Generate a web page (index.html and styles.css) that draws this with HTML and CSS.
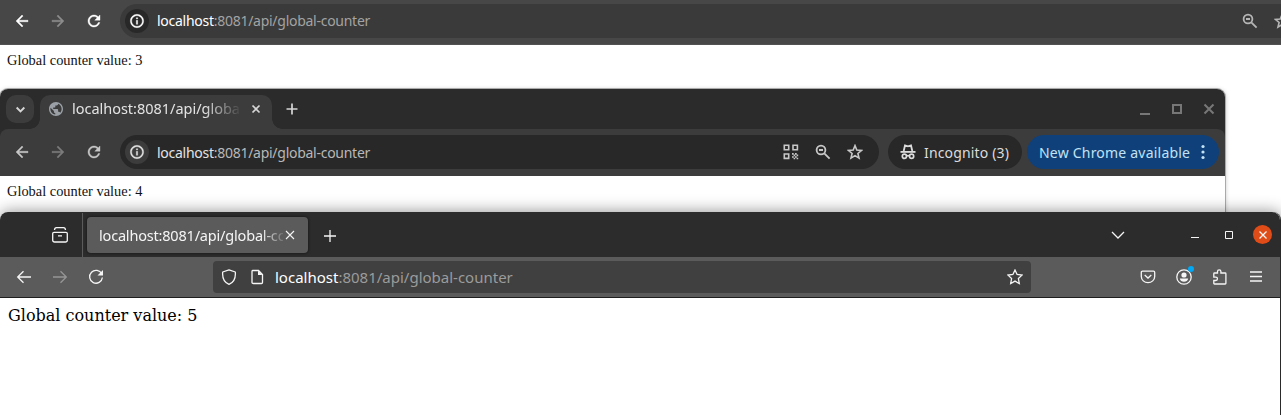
FILE: index.html
```html
<!DOCTYPE html>
<html lang="en">
<head>
<meta charset="utf-8">
<title>Global counter</title>
<link rel="stylesheet" href="styles.css">
</head>
<body>
<svg class="defs" width="0" height="0">
  <symbol id="back" viewBox="0 0 24 24"><path d="M20 11H7.83l5.59-5.59L12 4l-8 8 8 8 1.41-1.41L7.83 13H20v-2z"/></symbol>
  <symbol id="reload" viewBox="0 0 24 24"><path d="M17.65 6.35C16.2 4.9 14.21 4 12 4c-4.42 0-7.99 3.58-7.99 8s3.57 8 7.99 8c3.73 0 6.84-2.55 7.73-6h-2.08c-.82 2.33-3.04 4-5.65 4-3.31 0-6-2.69-6-6s2.69-6 6-6c1.66 0 3.14.69 4.22 1.78L13 11h7V4l-2.35 2.35z"/></symbol>
  <symbol id="info" viewBox="0 0 24 24"><path d="M11 7h2v2h-2zm0 4h2v6h-2zm1-9C6.48 2 2 6.48 2 12s4.48 10 10 10 10-4.48 10-10S17.52 2 12 2zm0 18c-4.41 0-8-3.59-8-8s3.59-8 8-8 8 3.59 8 8-3.59 8-8 8z"/></symbol>
  <symbol id="globe" viewBox="2 2 20 20"><path d="M12 2C6.480 2 2 6.480 2 12s4.480 10 10 10 10-4.480 10-10S17.520 2 12 2zm-1 17.930c-3.950-.490-7-3.850-7-7.930 0-.620.080-1.210.210-1.790L9 15v1c0 1.100.900 2 2 2v1.930zm6.900-2.540c-.260-.810-1-1.390-1.900-1.390h-1v-3c0-.550-.450-1-1-1H8v-2h2c.550 0 1-.450 1-1V7h2c1.100 0 2-.900 2-2v-.410c2.930 1.190 5 4.060 5 7.410 0 2.080-.800 3.970-2.100 5.390z"/></symbol>
  <symbol id="zoom" viewBox="0 0 16 16"><g fill="none" stroke="currentColor" stroke-width="1.8"><circle cx="6" cy="6" r="4.4"/><path d="M9.300 9.300 14.600 14.600M4 6h4"/></g></symbol>
  <symbol id="star" viewBox="0 0 16 16"><path d="M8 1.600 9.800 6l4.700.400-3.600 3.100 1.100 4.600L8 11.600l-4 2.500 1.100-4.600L1.500 6.400 6.200 6z" fill="none" stroke="currentColor" stroke-width="1.6"/></symbol>
  <symbol id="qr" viewBox="0 0 16 16"><g fill="none" stroke="currentColor" stroke-width="1.6"><path d="M1.300 1.300h4.400v4.400H1.300zM10 1.300h4.400v4.400H10zM1.300 10h4.400v4.400H1.300z"/></g><path d="M9 9h1.700v1.700H9zM12 9h1.700v1.700H12zM10.600 10.600h1.600v1.600h-1.600zM13.600 10.600h1.600v1.600h-1.600zM9 12.200h1.700v1.600H9zM12 12.200h1.700v1.600H12zM10.600 13.700h1.600v1.600h-1.600zM13.600 13.700h1.600v1.600h-1.600z"/></symbol>
  <symbol id="spy" viewBox="0 0 16 16"><path d="M.5 7h15v1.800H.5z"/><path d="M3.700 7 5 1.500l3 .9 3-.9L12.300 7" fill="none" stroke="currentColor" stroke-width="1.800"/><g fill="none" stroke="currentColor" stroke-width="1.700"><circle cx="4.400" cy="12.300" r="2.100"/><circle cx="11.600" cy="12.300" r="2.100"/><path d="M6.500 12q1.500-.8 3 0"/></g></symbol>
  <symbol id="foxback" viewBox="0 0 16 16"><path d="M15 8H1.800M7.500 2.200 1.700 8l5.800 5.800" class="line"/></symbol>
  <symbol id="foxreload" viewBox="0 0 16 16"><path d="M13.800 5A6.400 6.400 0 1 0 14.400 8.500" class="line"/><path d="M15 1v5.500H9.500z"/></symbol>
  <symbol id="foxstar" viewBox="0 0 16 16"><path d="M8 1 10.100 5.500 15 6.100 11.400 9.500 12.300 14.500 8 12.100 3.700 14.500 4.600 9.500 1 6.100 5.900 5.500z" class="line"/></symbol>
</svg>
<main class="desktop">
  <section class="window plain">
    <header class="toolbar">
      <span class="nav on"><svg><use href="#back"/></svg></span>
      <span class="nav flip"><svg><use href="#back"/></svg></span>
      <span class="nav on"><svg><use href="#reload"/></svg></span>
      <div class="omnibox">
        <span class="site"><svg><use href="#info"/></svg></span>
        <span class="url"><b>localhost</b>:8081/api/global-counter</span>
        <span class="act"><svg><use href="#zoom"/></svg></span>
        <span class="act"><svg><use href="#star"/></svg></span>
      </div>
    </header>
    <p class="page">Global counter value: 3</p>
  </section>

  <section class="window incog">
    <div class="tabs">
      <span class="search"><svg viewBox="0 0 10 10"><path d="M1.500 3.200 5 6.700l3.500-3.500" class="line thick"/></svg></span>
      <div class="tab">
        <svg class="fav"><use href="#globe"/></svg>
        <span class="title">localhost:8081/api/globa</span>
        <svg class="x" viewBox="0 0 10 10"><path d="m1.500 1.500 7 7m0-7-7 7" class="line thick"/></svg>
      </div>
      <svg class="plus" viewBox="0 0 12 12"><path d="M6 .5v11M.5 6h11" class="line thick"/></svg>
      <div class="controls">
        <svg viewBox="0 0 12 12"><path d="M1 10h10v2H1z"/></svg>
        <svg viewBox="0 0 12 12"><path d="M2 2h8v8H2z" class="line bold"/></svg>
        <svg viewBox="0 0 12 12"><path d="m1.500 1.500 9 9m0-9-9 9" class="line bold"/></svg>
      </div>
    </div>
    <header class="toolbar">
      <span class="nav"><svg><use href="#back"/></svg></span>
      <span class="nav flip"><svg><use href="#back"/></svg></span>
      <span class="nav"><svg><use href="#reload"/></svg></span>
      <div class="omnibox">
        <span class="site"><svg><use href="#info"/></svg></span>
        <span class="url"><b>localhost</b>:8081/api/global-counter</span>
        <span class="act"><svg><use href="#qr"/></svg></span>
        <span class="act"><svg><use href="#zoom"/></svg></span>
        <span class="act"><svg><use href="#star"/></svg></span>
      </div>
      <div class="mode"><svg><use href="#spy"/></svg><span>Incognito (3)</span></div>
      <div class="update"><span>New Chrome available</span><svg viewBox="0 0 4 16"><circle cx="2" cy="2.500" r="1.600"/><circle cx="2" cy="8" r="1.600"/><circle cx="2" cy="13.500" r="1.600"/></svg></div>
    </header>
    <p class="page">Global counter value: 4</p>
  </section>

  <section class="window fox">
    <div class="foxtabs">
      <div class="view"><svg class="i16" viewBox="0 0 16 16"><path d="M2 5.300h12a1.300 1.300 0 0 1 1.300 1.300v6.600a1.800 1.800 0 0 1-1.800 1.800h-11a1.800 1.800 0 0 1-1.800-1.800V6.600A1.300 1.300 0 0 1 2 5.300zM2.500 3Q2.600.800 4.500.700h7q1.900.100 2 2.300M6 8.900h4" class="line"/></svg></div>
      <div class="foxtab"><span class="foxtitle">localhost:8081/api/global-co</span><svg viewBox="0 0 10 10"><path d="m1 1 8 8m0-8-8 8" class="line"/></svg></div>
      <svg class="foxplus" viewBox="0 0 12 12"><path d="M6 0v12M0 6h12" class="line"/></svg>
      <svg class="all" viewBox="0 0 14 8"><path d="m1 1 6 6 6-6" class="line"/></svg>
      <div class="foxcontrols">
        <svg viewBox="0 0 8 8"><path d="M0 6h8v1H0z"/></svg>
        <svg viewBox="0 0 8 8"><path d="M.5.5h7v7h-7z" class="line thin"/></svg>
        <span class="close"><svg viewBox="0 0 8 8"><path d="m.5.5 7 7m0-7-7 7" class="line"/></svg></span>
      </div>
    </div>
    <header class="foxbar">
      <span class="fnav"><svg class="i16"><use href="#foxback"/></svg></span>
      <span class="fnav flip"><svg class="i16"><use href="#foxback"/></svg></span>
      <span class="fnav"><svg class="i16"><use href="#foxreload"/></svg></span>
      <div class="address">
        <svg class="i16" viewBox="0 0 16 16"><path d="M8 .8 14.300 3c.5 5.500-1.300 10.200-6.300 12.300C3 13.200 1.200 8.500 1.700 3z" class="line" stroke-linejoin="round"/></svg>
        <svg class="i16 doc" viewBox="0 0 16 16"><path d="M3.500 1.500h6l4 4v8q0 1-1 1h-8q-1.500 0-1.500-1V2.500q0-1 .5-1z" class="line"/><path d="M9 1.500V6h4.500z"/></svg>
        <span class="url"><b>localhost</b>:8081/api/global-counter</span>
        <svg class="i16"><use href="#foxstar"/></svg>
      </div>
      <div class="tools">
        <span class="fnav"><svg class="i16" viewBox="0 0 16 16"><path d="M2.500 2.200h11q1.200 0 1.200 1.200V7.500a6.700 6.200 0 0 1-13.400 0V3.400q0-1.200 1.200-1.200zM4.700 6 8 9l3.300-3" class="line"/></svg></span>
        <span class="fnav account"><svg class="i16" viewBox="0 0 16 16"><circle cx="8" cy="8" r="7.200" class="line"/><circle cx="8" cy="6" r="2.600"/><path d="M3.800 9.600h8.400q-.8 3.200-4.200 3.200t-4.200-3.200z"/></svg></span>
        <span class="fnav"><svg class="i16" viewBox="0 0 16 16"><path d="M5.500 4V2.500a1.700 1.700 0 0 1 3.400 0V4h4.300q.7 0 .7.700v9.600q0 .7-.7.700H2.500q-.7 0-.7-.7V11.500h2a1.600 1.600 0 0 0 0-3.300h-2V4.700q0-.7.700-.7z" class="line"/></svg></span>
        <span class="fnav"><svg class="i16" viewBox="0 0 16 16"><path d="M2 3h12M2 7.500h12M2 12h12" class="line"/></svg></span>
      </div>
    </header>
    <p class="page">Global counter value: 5</p>
  </section>
</main>
</body>
</html>
```
FILE: styles.css
```css
* { box-sizing: border-box; }
body { margin: 0; background: #fff; font-family: "Noto Sans", sans-serif; font-size: 14px; }
.defs { position: absolute; }
svg { flex: none; display: block; fill: currentColor; width: 16px; height: 16px; }
b { font-weight: 400; }
.line { fill: none; stroke: currentColor; stroke-width: 1.3; }
.thick { stroke-width: 1.7; }
.bold { stroke-width: 2; }
.thin { stroke-width: 1; }
.flip svg { transform: scaleX(-1); }

.desktop { position: relative; height: 415px; overflow: hidden; }
.window { position: absolute; left: 0; }
.page { margin: 0; padding: 6px 7px; line-height: 18px; color: #111; font-family: "Liberation Serif", serif; font-size: 14.4px; }

.toolbar { display: flex; align-items: center; padding-left: 4px; color: #c7c7c7; }
.nav { width: 36px; display: flex; justify-content: center; }
.nav svg { width: 18px; height: 18px; stroke: currentColor; stroke-width: .5; }
.nav.flip { color: #7b7b7b; }
.omnibox { display: flex; align-items: center; height: 34px; margin-left: 8px; padding: 0 8px 0 5px; border-radius: 17px; }
.site { width: 24px; height: 24px; border-radius: 50%; display: grid; place-items: center; margin-right: 8px; color: #e3e3e3; }
.site svg { stroke: currentColor; stroke-width: .5; }
.url { flex: 1; white-space: nowrap; letter-spacing: -.27px; }
.act { width: 32px; display: flex; justify-content: center; }

.plain { top: 0; width: 1306px; }
.plain .toolbar { height: 45px; padding-bottom: 3px; background: #474747; border-bottom: 1px solid #525252; }
.plain .on { color: #fff; }
.plain .nav.flip { color: #8c8c8c; }
.plain .omnibox { flex: 1; background: #3a3a3a; }
.plain .site { background: #282828; color: #fff; }
.plain .url { color: #a3a3a3; }
.plain .url b { color: #fff; }
.plain .act { color: #b5b5b5; }

.incog { top: 89px; width: 1225px; height: 160px; background: linear-gradient(#2b2b2b 60px, #fff 60px); border-radius: 8px 8px 0 0; box-shadow: 0 0 0 1px #aaa, 0 1px 5px rgba(0,0,0,.3); }
.tabs { display: flex; align-items: center; height: 40px; border-radius: 8px 8px 0 0; padding-left: 6px; color: #d6d6d6; }
.search { width: 28px; height: 28px; border-radius: 10px; background: #3c3c3c; display: grid; place-items: center; }
.search svg { width: 11px; height: 11px; }
.tab { position: relative; width: 232px; height: 34px; margin: 6px 0 0 6px; padding: 0 11px 6px 9px; display: flex; align-items: center; background: #3c3c3c; border-radius: 10px 10px 0 0; }
.tab::before, .tab::after { content: ""; position: absolute; bottom: 0; width: 10px; height: 10px; }
.tab::before { left: -10px; background: radial-gradient(circle at 0 0, transparent 9.5px, #3c3c3c 10px); }
.tab::after { right: -10px; background: radial-gradient(circle at 100% 0, transparent 9.5px, #3c3c3c 10px); }
.fav { width: 14px; height: 14px; color: #9aa0a6; }
.title { width: 170px; margin: -2px 9px 0 9px; white-space: nowrap; font-size: 14.5px; letter-spacing: -.02px; color: #e3e3e3; mask-image: linear-gradient(90deg, #000 132px, transparent 170px); }
.x { width: 10px; height: 10px; }
.plus { width: 12px; height: 12px; margin-left: 14px; }
.controls { display: flex; margin-left: auto; color: #777; }
.controls svg { width: 12px; height: 12px; margin: 0 10px; }
.incog .toolbar { height: 47px; padding-bottom: 1px; background: #3c3c3c; border-radius: 8px 8px 0 0; }
.incog .omnibox { width: 759px; background: #282828; }
.incog .site { background: #3c3c3c; }
.incog .url { color: #b8b8b8; }
.incog .url b { color: #e3e3e3; }
.mode, .update { display: flex; align-items: center; height: 34px; border-radius: 17px; white-space: nowrap; }
.mode { width: 134px; margin-left: 9px; padding-left: 12px; gap: 8px; background: #282828; color: #dcdcdc; letter-spacing: .15px; }
.update { width: 192px; margin-left: 5px; padding: 0 14px 0 12px; justify-content: space-between; background: #0f4079; color: #c2e2f5; letter-spacing: .21px; }
.update svg { width: 4px; }

.fox { top: 212px; width: 1281px; height: 240px; background: #fff; border-right: 1px solid #2a2a2a; border-radius: 8px 8px 0 0; box-shadow: 0 0 16px rgba(0,0,0,.45); color: #f5f5f5; }
.foxtabs { display: flex; align-items: center; height: 45px; background: #2c2c2c; border-radius: 8px 8px 0 0; }
.view { width: 83px; height: 44px; margin-top: 1px; padding-left: 52px; display: flex; align-items: center; border-right: 1px solid #5b5b5b; }
.foxtab { width: 221px; height: 36px; margin: 1px 0 0 4px; padding: 0 13px 0 12px; display: flex; align-items: center; border-radius: 4px; background: #5b5b5b; box-shadow: 0 0 3px #111; }
.foxtitle { width: 184px; margin-right: 2px; white-space: nowrap; font-size: 14.5px; letter-spacing: -.19px; mask-image: linear-gradient(90deg, #000 162px, transparent 188px); }
.foxtab svg { width: 10px; height: 10px; }
.foxtab .line { stroke-width: 1.1; }
.foxplus { width: 12px; height: 12px; margin-left: 16px; margin-top: 2px; }
.all { width: 14px; height: 8px; margin-left: auto; }
.foxcontrols { display: flex; align-items: center; padding: 0 8px 0 66px; gap: 26px; }
.foxcontrols svg { width: 8px; height: 8px; }
.close { width: 19px; height: 19px; margin-left: -6px; border-radius: 50%; background: #e04c18; display: grid; place-items: center; }
.foxbar { display: flex; align-items: center; height: 41px; padding-left: 6px; background: #5b5b5b; border-bottom: 1px solid #1e1e1e; padding-top: 0; height: 86px; height: 41px; }
.fnav { width: 36px; display: flex; justify-content: center; }
.fnav.flip { color: #969696; }
.address { display: flex; align-items: center; width: 818px; height: 32px; margin-left: 99px; padding: 0 8px; border-radius: 4px; background: #404040; }
.doc { margin: 0 10px 0 12px; }
.fox .url { font-size: 15px; letter-spacing: 0; color: #9b9b9b; }
.fox .url b { color: #fff; }
.tools { display: flex; margin-left: auto; padding-right: 6px; }
.account { position: relative; }
.account::after { content: ""; position: absolute; width: 6px; height: 6px; right: 8px; top: -3px; border-radius: 50%; background: #00a8f5; }
.fox .page { padding: 8px; font-family: "DejaVu Serif", serif; font-size: 16px; line-height: 19px; color: #000; }
```
